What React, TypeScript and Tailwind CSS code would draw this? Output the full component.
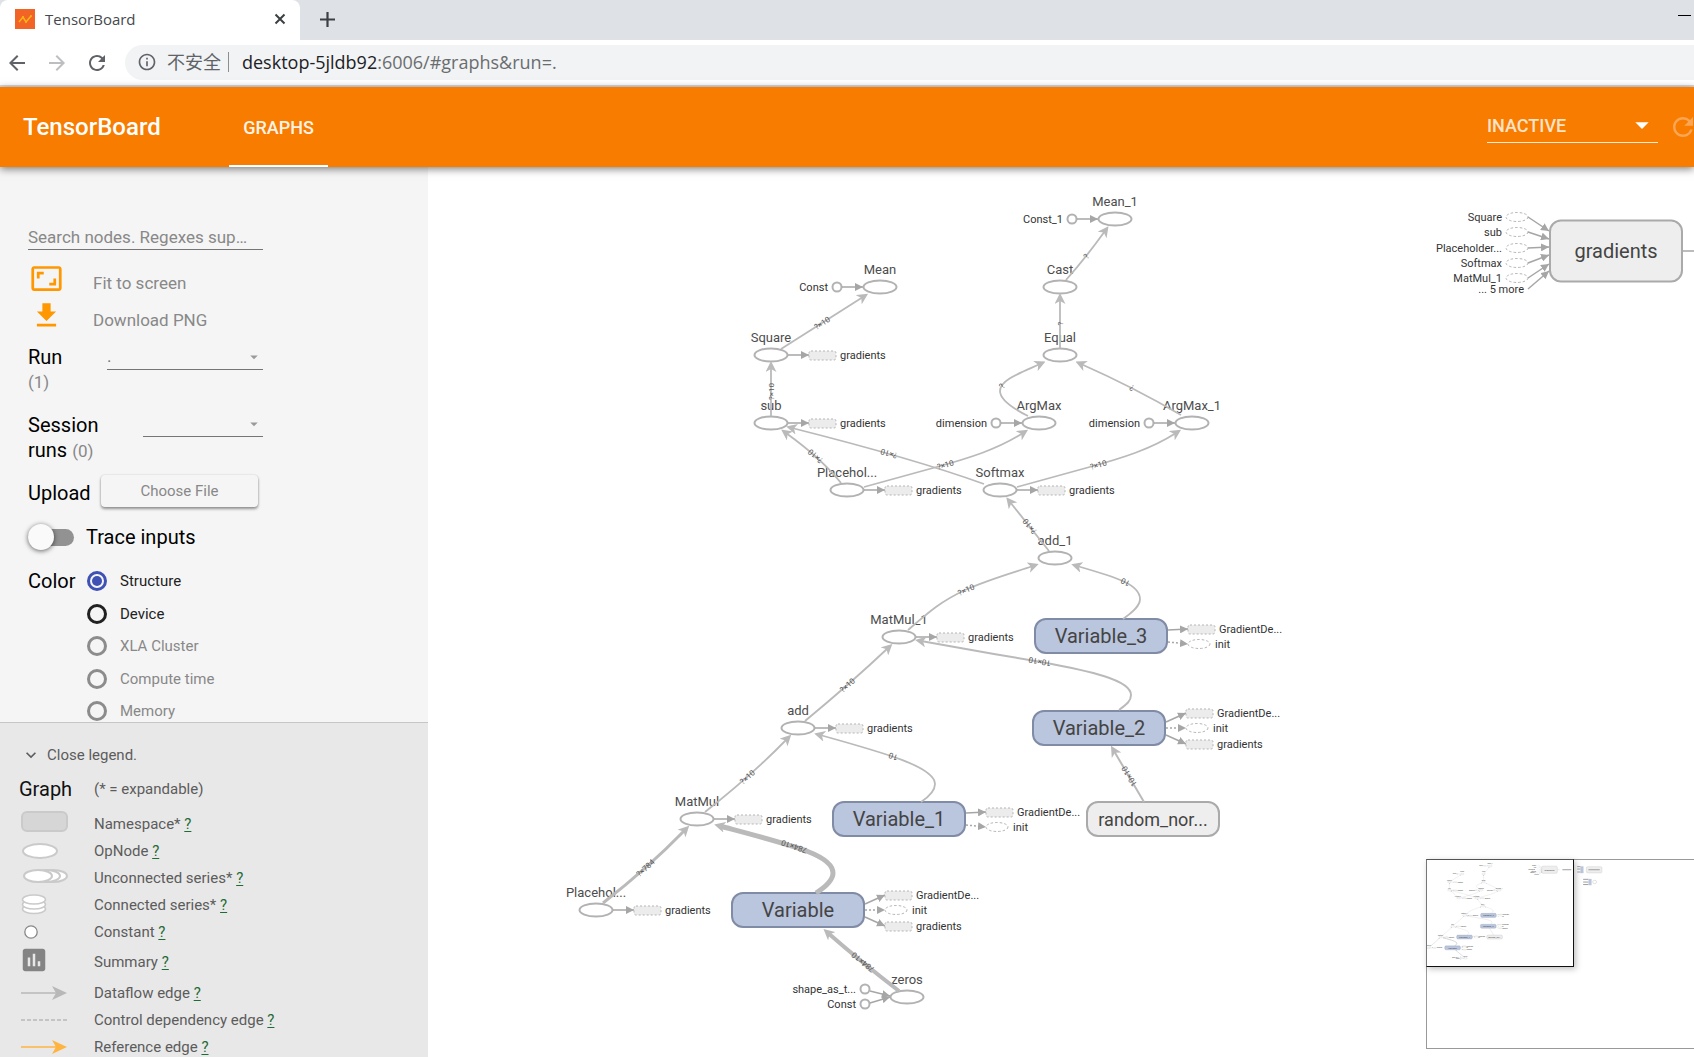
import type { ReactNode } from 'react';
import {
  MdArrowBack,
  MdArrowDropDown,
  MdArrowForward,
  MdAspectRatio,
  MdAssessment,
  MdFileDownload,
  MdInfoOutline,
  MdKeyboardArrowDown,
  MdRefresh,
} from 'react-icons/md';

type OpNode = {
  id: string;
  label: string;
  x: number;
  y: number;
  constant?: string;
  gradients?: boolean;
};

type GroupNode = {
  id: string;
  label: string;
  x: number;
  y: number;
  height: number;
  fontSize: number;
  plain?: boolean;
  outputs?: { label: string; dy: number; from: number; control?: boolean }[];
};

type Edge = {
  id: string;
  d: string;
  label: string;
  width?: number;
};

const OP_NODES: OpNode[] = [
  { id: 'mean1', label: 'Mean_1', x: 1115, y: 219, constant: 'Const_1' },
  { id: 'mean', label: 'Mean', x: 880, y: 287, constant: 'Const' },
  { id: 'cast', label: 'Cast', x: 1060, y: 287 },
  { id: 'square', label: 'Square', x: 771, y: 355, gradients: true },
  { id: 'equal', label: 'Equal', x: 1060, y: 355 },
  { id: 'sub', label: 'sub', x: 771, y: 423, gradients: true },
  { id: 'argmax', label: 'ArgMax', x: 1039, y: 423, constant: 'dimension' },
  { id: 'argmax1', label: 'ArgMax_1', x: 1192, y: 423, constant: 'dimension' },
  { id: 'placeholder1', label: 'Placehol...', x: 847, y: 490, gradients: true },
  { id: 'softmax', label: 'Softmax', x: 1000, y: 490, gradients: true },
  { id: 'add1', label: 'add_1', x: 1055, y: 558 },
  { id: 'matmul1', label: 'MatMul_1', x: 899, y: 637, gradients: true },
  { id: 'add', label: 'add', x: 798, y: 728, gradients: true },
  { id: 'matmul', label: 'MatMul', x: 697, y: 819, gradients: true },
  { id: 'placeholder', label: 'Placehol...', x: 596, y: 910, gradients: true },
  { id: 'zeros', label: 'zeros', x: 907, y: 997 },
];

const TWO_OUTPUTS = [
  { label: 'GradientDe...', dy: -7, from: -6 },
  { label: 'init', dy: 8, from: 6, control: true },
];

const THREE_OUTPUTS = [
  { label: 'GradientDe...', dy: -15, from: -6 },
  { label: 'init', dy: 0, from: 0, control: true },
  { label: 'gradients', dy: 16, from: 7 },
];

const GROUP_NODES: GroupNode[] = [
  { id: 'v3', label: 'Variable_3', x: 1101, y: 636, height: 34, fontSize: 20, outputs: TWO_OUTPUTS },
  { id: 'v2', label: 'Variable_2', x: 1099, y: 728, height: 34, fontSize: 20, outputs: THREE_OUTPUTS },
  { id: 'v1', label: 'Variable_1', x: 899, y: 819, height: 34, fontSize: 20, outputs: TWO_OUTPUTS },
  { id: 'v0', label: 'Variable', x: 798, y: 910, height: 34, fontSize: 20, outputs: THREE_OUTPUTS },
  { id: 'random', label: 'random_nor...', x: 1153, y: 819, height: 34, fontSize: 18, plain: true },
  { id: 'gradients', label: 'gradients', x: 1616, y: 251, height: 61, fontSize: 20, plain: true },
];

const EDGES: Edge[] = [
  { id: 'cast-mean1', d: 'M1066 280 Q1084 260 1105 231', label: '?' },
  { id: 'square-mean', d: 'M781 349 L863 297', label: '?×10' },
  { id: 'sub-square', d: 'M771 416 V367', label: '?×10' },
  { id: 'equal-cast', d: 'M1060 348 V299', label: '?' },
  { id: 'argmax-equal', d: 'M1028 416 C1012 408 1000 399 1000 391 C1000 380 1020 373 1040 364', label: '?' },
  { id: 'argmax1-equal', d: 'M1181 415 Q1133 387 1081 364', label: '?' },
  { id: 'placeholder-sub', d: 'M841 483 Q822 459 786 433', label: '?×10' },
  { id: 'softmax-sub', d: 'M984 484 Q915 459 792 428', label: '?×10' },
  { id: 'placeholder-argmax', d: 'M864 487 L933 468 C970 458 998 449 1023 433', label: '?×10' },
  { id: 'softmax-argmax1', d: 'M1017 487 L1086 468 C1123 458 1151 449 1176 433', label: '?×10' },
  { id: 'add1-softmax', d: 'M1049 551 L1010 502', label: '?×10' },
  { id: 'matmul1-add1', d: 'M908 630 C930 611 940 602 965 590 C990 579 1012 573 1033 566', label: '?×10' },
  { id: 'v3-add1', d: 'M1123 619 C1133 612 1140 606 1140 599 C1140 584 1115 577 1077 566', label: '10' },
  { id: 'v2-matmul1', d: 'M1119 710 C1127 704 1131 701 1131 695 C1131 680 1090 671 1041 662 C1000 655 965 649 921 641', label: '10×10', width: 2 },
  { id: 'add-matmul1', d: 'M805 721 Q851 683 888 648', label: '?×10' },
  { id: 'matmul-add', d: 'M705 812 Q751 776 787 739', label: '?×10' },
  { id: 'v1-add', d: 'M921 802 C930 796 935 790 935 784 C935 767 885 753 820 735', label: '10' },
  { id: 'placeholder-matmul', d: 'M603 903 Q648 868 685 830', label: '?×784', width: 3 },
  { id: 'v0-matmul', d: 'M816 893 C827 886 833 880 833 873 C833 855 795 846 720 826', label: '784×10', width: 5 },
  { id: 'zeros-v0', d: 'M899 991 Q860 961 828 933', label: '784×10', width: 4 },
  { id: 'random-v2', d: 'M1144 802 L1114 751', label: '10×10', width: 2 },
];

const GRADIENT_INPUTS = [
  { label: 'Square', y: 217, to: 231 },
  { label: 'sub', y: 232, to: 239 },
  { label: 'Placeholder...', y: 248, to: 247 },
  { label: 'Softmax', y: 263, to: 255 },
  { label: 'MatMul_1', y: 278, to: 264 },
];

function AnnotationBox({ x, y }: { x: number; y: number }) {
  return (
    <rect x={x} y={y - 4} width="27" height="9" rx="2" fill="#ececec" stroke="#b5b5b5" strokeDasharray="2 2" />
  );
}

function OpNodeShape({ node }: { node: OpNode }) {
  const { x, y } = node;
  return (
    <g>
      <ellipse cx={x} cy={y} rx="16.5" ry="6.5" fill="#fff" stroke="#b2b2b2" strokeWidth="2" />
      <text x={x} y={y - 13} textAnchor="middle" fontSize="13" fill="#4d4d4d">
        {node.label}
      </text>
      {node.constant && (
        <>
          <circle cx={x - 43} cy={y} r="4.5" fill="#fff" stroke="#b2b2b2" strokeWidth="2" />
          <path d={`M${x - 38} ${y} H${x - 17}`} stroke="#a6a6a6" strokeWidth="1.5" markerEnd="url(#small-arrow)" />
          <text x={x - 52} y={y + 4} textAnchor="end" fontSize="11" fill="#333">
            {node.constant}
          </text>
        </>
      )}
      {node.gradients && (
        <>
          <path d={`M${x + 17} ${y} H${x + 38}`} stroke="#a6a6a6" strokeWidth="1.5" markerEnd="url(#small-arrow)" />
          <AnnotationBox x={x + 38} y={y} />
          <text x={x + 69} y={y + 4} fontSize="11" fill="#333">
            gradients
          </text>
        </>
      )}
    </g>
  );
}

function GroupNodeShape({ node }: { node: GroupNode }) {
  const { x, y, height } = node;
  return (
    <g>
      <rect
        x={x - 66}
        y={y - height / 2}
        width="132"
        height={height}
        rx="11"
        fill={node.plain ? '#eee' : '#bac5de'}
        stroke={node.plain ? '#aaa' : '#808ba6'}
        strokeWidth="2"
      />
      <text x={x} y={y + 7} textAnchor="middle" fontSize={node.fontSize} fill="#444">
        {node.label}
      </text>
      {node.outputs?.map((out) => (
        <g key={out.label}>
          <path
            d={`M${x + 67} ${y + out.from} L${x + 87} ${y + out.dy}`}
            stroke="#a6a6a6"
            strokeWidth="1.5"
            strokeDasharray={out.control ? '2 2' : undefined}
            markerEnd="url(#small-arrow)"
          />
          {out.control ? (
            <ellipse cx={x + 98} cy={y + out.dy} rx="11" ry="4.5" fill="#fff" stroke="#b5b5b5" strokeDasharray="2.5 2" />
          ) : (
            <AnnotationBox x={x + 87} y={y + out.dy} />
          )}
          <text x={out.control ? x + 114 : x + 118} y={y + out.dy + 4} fontSize="11" fill="#333">
            {out.label}
          </text>
        </g>
      ))}
    </g>
  );
}

function GraphScene({ labels = true }: { labels?: boolean }) {
  return (
    <g fill="none">
      {OP_NODES.map((node) => (
        <OpNodeShape key={node.id} node={node} />
      ))}
      {GROUP_NODES.map((node) => (
        <GroupNodeShape key={node.id} node={node} />
      ))}

      {/* Constants feeding "zeros" */}
      <circle cx="865" cy="989" r="4.5" stroke="#b2b2b2" strokeWidth="2" />
      <circle cx="865" cy="1004" r="4.5" stroke="#b2b2b2" strokeWidth="2" />
      <path d="M870 991 L890 996" stroke="#a6a6a6" strokeWidth="1.5" markerEnd="url(#small-arrow)" />
      <path d="M870 1003 L890 997" stroke="#a6a6a6" strokeWidth="1.5" markerEnd="url(#small-arrow)" />
      <text x="856" y="993" textAnchor="end" fontSize="11" fill="#333">shape_as_t...</text>
      <text x="856" y="1008" textAnchor="end" fontSize="11" fill="#333">Const</text>

      {/* Inputs of the gradients namespace */}
      {GRADIENT_INPUTS.map((input) => (
        <g key={input.label}>
          <ellipse cx="1517" cy={input.y} rx="11" ry="4.5" stroke="#b5b5b5" strokeDasharray="2.5 2" />
          <path d={`M1528 ${input.y} L1549 ${input.to}`} stroke="#a6a6a6" strokeWidth="1.5" markerEnd="url(#small-arrow)" />
          <text x="1502" y={input.y + 4} textAnchor="end" fontSize="11" fill="#333">
            {input.label}
          </text>
        </g>
      ))}
      <path d="M1528 289 L1549 271" stroke="#a6a6a6" strokeWidth="1.5" markerEnd="url(#small-arrow)" />
      <text x="1524" y="293" textAnchor="end" fontSize="11" fill="#333">... 5 more</text>
      <path d="M1683 251 H1706" stroke="#a6a6a6" strokeWidth="1.5" />

      {EDGES.map((edge) => (
        <path
          key={edge.id}
          d={edge.d}
          stroke="#bababa"
          strokeWidth={edge.width ?? 1.8}
          markerEnd="url(#edge-arrow)"
        />
      ))}
      {labels &&
        EDGES.map((edge) => (
          <g key={edge.id}>
            <path id={edge.id} d={edge.d} />
            <text dy="3" fontSize="8" fill="#555" textAnchor="middle">
              <textPath href={`#${edge.id}`} startOffset="50%">
                {edge.label}
              </textPath>
            </text>
          </g>
        ))}
    </g>
  );
}

function Minimap() {
  return (
    <div className="absolute bottom-2 left-[998px] h-[190px] w-[300px] border border-[#999] bg-white">
      <svg className="h-full w-full" aria-hidden="true">
        <g transform="translate(-69 -20) scale(0.1185)">
          <GraphScene labels={false} />
          <rect x="1927" y="225" width="132" height="53" rx="12" fill="#eee" stroke="#aaa" strokeWidth="2" />
          <path d="M1945 251 H2040" stroke="#999" strokeWidth="8" />
          <path d="M1725 251 H1800 M1878 225 H1850 M1878 245 H1850 M1878 270 H1850" stroke="#999" strokeWidth="8" />
          <path d="M1890 222 V280" stroke="#bac5de" strokeWidth="26" />
          <path d="M1945 332 H1900 M1945 355 H1900 M1945 376 H1900" stroke="#999" strokeWidth="8" />
          <path d="M1958 328 V382" stroke="#bac5de" strokeWidth="26" />
          <ellipse cx="1997" cy="354" rx="17" ry="14" fill="none" stroke="#b2b2b2" strokeWidth="3" />
        </g>
      </svg>
      <div className="absolute -top-px -left-px h-[108px] w-[148px] border border-[#111] border-t-[#555] border-l-[#777] shadow-[2px_2px_6px_rgba(0,0,0,0.25)]" />
    </div>
  );
}

function GraphBoard() {
  return (
    <main className="relative min-w-0 flex-1 overflow-hidden bg-white">
      <svg className="block h-full w-full" role="img" aria-label="Main graph">
        <defs>
          <marker id="edge-arrow" markerUnits="userSpaceOnUse" markerWidth="11" markerHeight="11" refX="5" refY="5.5" orient="auto">
            <path d="M0 0 L11 5.5 L0 11 L3 5.5 Z" fill="#bababa" />
          </marker>
          <marker id="small-arrow" markerUnits="userSpaceOnUse" markerWidth="8" markerHeight="8" refX="8" refY="4" orient="auto">
            <path d="M0 0 L8 4 L0 8 Z" fill="#a6a6a6" />
          </marker>
        </defs>
        <g transform="translate(-428 -167)">
          <GraphScene />
        </g>
      </svg>
      <Minimap />
    </main>
  );
}

function BrowserChrome() {
  return (
    <div className="shrink-0 border-b-2 border-[#d6dae0] bg-white font-['Open_Sans','Noto_Sans_CJK_SC',sans-serif]">
      <div className="flex h-10 bg-[#dee1e6]">
        <div className="flex h-10 w-[300px] items-center rounded-t-lg bg-white pr-3 pb-0.5 pl-[15px]">
          <svg className="size-5" viewBox="0 0 20 20" aria-hidden="true">
            <rect width="20" height="20" fill="#f26425" />
            <path d="M4 13 L8 8 L11 13 L16 7" fill="none" stroke="#fdb515" strokeWidth="1.5" />
            <circle cx="8" cy="8" r="1" fill="#fdb515" />
            <circle cx="11" cy="13" r="1" fill="#fdb515" />
            <circle cx="16" cy="7" r="1" fill="#fdb515" />
          </svg>
          <span className="ml-2.5 flex-1 text-[15px] leading-5 text-[#45494d]">TensorBoard</span>
          <button type="button" aria-label="Close tab" className="flex size-4 items-center justify-center">
            <svg className="size-3" viewBox="0 0 12 12" aria-hidden="true">
              <path d="M1.5 1.5 L10.5 10.5 M10.5 1.5 L1.5 10.5" stroke="#3c4043" strokeWidth="2" />
            </svg>
          </button>
        </div>
        <button type="button" aria-label="New tab" className="ml-5 self-center pb-0.5">
          <svg className="size-[15px]" viewBox="0 0 15 15" aria-hidden="true">
            <path d="M7.5 0 V15 M0 7.5 H15" stroke="#3c4043" strokeWidth="2.2" />
          </svg>
        </button>
        <button type="button" aria-label="Minimize" className="mt-[15px] mr-[3px] ml-auto h-px w-[13px] bg-black" />
      </div>
      <div className="flex h-[45px] items-center pl-[5px] text-[#5f6368]">
        <button type="button" aria-label="Back">
          <MdArrowBack className="size-6" />
        </button>
        <button type="button" aria-label="Forward" className="ml-4 text-[#bcbebf]">
          <MdArrowForward className="size-6" />
        </button>
        <button type="button" aria-label="Reload" className="ml-4">
          <MdRefresh className="size-6" />
        </button>
        <div className="ml-4 flex h-[35px] flex-1 items-center rounded-l-full bg-[#f1f3f4] pb-0.5 pl-3">
          <MdInfoOutline className="size-5" />
          <span className="ml-2.5 text-[18px] leading-6">不安全</span>
          <span className="mx-[7px] h-5 w-px bg-[#8c8f92]" />
          <span className="ml-1.5 text-[18px] leading-6 text-[#6a6d70]">
            <span className="text-[#202124]">desktop-5jldb92</span>:6006/#graphs&run=.
          </span>
        </div>
      </div>
    </div>
  );
}

function Header() {
  return (
    <header className="relative z-10 flex h-20 shrink-0 items-stretch bg-[#f77c00] text-white shadow-[0_2px_8px_rgba(0,0,0,0.5)]">
      <h1 className="flex w-[229px] items-center pl-[23px] text-[24px] font-medium">TensorBoard</h1>
      <nav className="flex">
        <button type="button" className="w-[99px] border-b-2 border-white pt-0.5 text-[18px] font-medium text-[#fff3e6]">
          GRAPHS
        </button>
      </nav>
      <div className="ml-auto flex items-center">
        <div className="relative mb-1 flex items-center">
          <select
            aria-label="Dashboard"
            className="h-9 w-[171px] appearance-none border-b border-[#fdebd8] bg-transparent pt-0.5 text-[18px] font-medium text-[#fee3c8] outline-none"
          >
            <option>INACTIVE</option>
          </select>
          <MdArrowDropDown className="pointer-events-none absolute right-0 size-8" />
        </div>
        <button type="button" aria-label="Reload data" className="ml-2.5 -mr-1 text-[#fba654]">
          <MdRefresh className="size-[30px]" />
        </button>
      </div>
    </header>
  );
}

const COLOR_MODES = [
  { label: 'Structure', disabled: false },
  { label: 'Device', disabled: false },
  { label: 'XLA Cluster', disabled: true },
  { label: 'Compute time', disabled: true },
  { label: 'Memory', disabled: true },
];

function Dropdown({ id, value }: { id: string; value: string }) {
  return (
    <div className="relative flex flex-1 items-start">
      <select
        id={id}
        className="h-7 w-full appearance-none border-b border-[#757575] bg-transparent text-[17px] text-[#757575] outline-none"
      >
        <option>{value}</option>
      </select>
      <MdArrowDropDown className="pointer-events-none absolute top-1.5 right-0 size-[18px] text-[#9a9a9a]" />
    </div>
  );
}

function Controls() {
  return (
    <section className="min-h-0 flex-1 overflow-hidden text-[20px] leading-6 text-black">
      <div className="w-[263px] pt-[55px] pl-7">
        <input
          type="text"
          aria-label="Search nodes"
          placeholder="Search nodes. Regexes supported."
          className="block h-7 w-full border-b border-[#757575] bg-transparent pt-0.5 pr-3 text-[17px] text-ellipsis outline-none placeholder:text-[#888]"
        />
        <button type="button" className="mt-3 flex h-[37px] items-center gap-[30px] pl-0.5 text-[17px] text-[#888]">
          <MdAspectRatio className="mb-1 size-[33px] text-[#ff9800]" />
          <span className="pt-1">Fit to screen</span>
        </button>
        <button type="button" className="flex h-[37px] items-center gap-[30px] pl-0.5 text-[17px] text-[#888]">
          <MdFileDownload className="mb-1 size-[33px] text-[#ff9800]" />
          <span className="pt-1">Download PNG</span>
        </button>

        <div className="mt-1.5 flex">
          <label htmlFor="run" className="w-[79px] pt-[3px] leading-[25px]">
            Run
            <span className="block text-[17px] text-[#888]">(1)</span>
          </label>
          <Dropdown id="run" value="." />
        </div>
        <div className="mt-3.5 flex">
          <label htmlFor="session" className="w-[115px] pt-1 leading-[25px]">
            Session
            <br />
            runs <span className="text-[17px] text-[#888]">(0)</span>
          </label>
          <Dropdown id="session" value="" />
        </div>

        <div className="mt-[11px] flex items-center">
          <span className="w-[73px] pt-1">Upload</span>
          <button
            type="button"
            className="h-8 w-[157px] rounded-sm text-[15px] text-[#888] shadow-[0_2px_3px_rgba(0,0,0,0.4),0_0_2px_rgba(0,0,0,0.15)]"
          >
            Choose File
          </button>
        </div>

        <label className="mt-[18px] flex items-center">
          <input type="checkbox" className="peer sr-only" />
          <span className="flex h-[17px] w-[46px] items-center rounded-full bg-[#929292]">
            <span className="size-[26px] shrink-0 rounded-full bg-[#fafafa] shadow-[0_1px_5px_rgba(0,0,0,0.6)]" />
          </span>
          <span className="ml-3">Trace inputs</span>
        </label>

        <fieldset className="mt-4 flex">
          <legend className="float-left w-[59px] pt-1">Color</legend>
          <div className="flex-1">
            {COLOR_MODES.map((mode, i) => (
              <label
                key={mode.label}
                className={`flex items-center gap-[13px] text-[15px] ${i % 2 === 0 ? 'h-8' : 'h-[33px]'} ${mode.disabled ? 'text-[#888]' : 'text-[#222]'}`}
              >
                <input
                  type="radio"
                  name="color"
                  defaultChecked={i === 0}
                  disabled={mode.disabled}
                  className="size-5 appearance-none rounded-full border-3 border-[#212121] p-0.5 checked:border-[#3f51b5] checked:bg-[#3f51b5] checked:bg-clip-content disabled:border-[#8c8c8c]"
                />
                {mode.label}
              </label>
            ))}
          </div>
        </fieldset>
      </div>
    </section>
  );
}

function LegendRow({ icon, label, className = 'h-[27px]' }: { icon: ReactNode; label: string; className?: string }) {
  return (
    <li className={`flex items-center ${className}`}>
      <span className="w-[73px]">{icon}</span>
      <span>
        {label}{' '}
        <a href="#help" className="text-[#1f6b35] underline underline-offset-2">
          ?
        </a>
      </span>
    </li>
  );
}

function ArrowIcon({ color }: { color: string }) {
  return (
    <svg width="48" height="16" aria-hidden="true">
      <path d="M0 8 H38" stroke={color} strokeWidth="1.5" />
      <path d="M31 1 L46 8 L31 15 L35 8 Z" fill={color} />
    </svg>
  );
}

function Legend() {
  return (
    <section className="h-[335px] shrink-0 overflow-hidden border-t border-[#c6c6c6] bg-[#e8e8e8] pt-5 text-[15px] leading-5 text-[#5c5c5c]">
      <button type="button" className="flex h-6 items-center pl-[21px]">
        <MdKeyboardArrowDown className="size-5" />
        <span className="ml-1.5">Close legend.</span>
      </button>
      <div className="mt-2.5 flex h-6 items-center pl-[19px]">
        <h2 className="w-[75px] text-[20px] text-[#111]">Graph</h2>
        <span>(* = expandable)</span>
      </div>
      <ul className="mt-[9px] pl-[21px]">
        <LegendRow
          label="Namespace*"
          icon={
            <svg className="mb-1" width="48" height="22" aria-hidden="true">
              <rect x="1" y="1" width="45" height="19" rx="5" fill="#d6d6d6" stroke="#cacaca" strokeWidth="2" />
            </svg>
          }
        />
        <LegendRow
          label="OpNode"
          icon={
            <svg width="48" height="18" aria-hidden="true">
              <ellipse cx="19" cy="9" rx="17" ry="7" fill="#fff" stroke="#cacaca" strokeWidth="2" />
            </svg>
          }
        />
        <LegendRow
          label="Unconnected series*"
          icon={
            <svg className="mb-1" width="48" height="16" aria-hidden="true">
              <g fill="#fff" stroke="#cacaca" strokeWidth="2">
                <ellipse cx="32" cy="8" rx="14" ry="6" />
                <ellipse cx="25" cy="8" rx="14" ry="6" />
                <ellipse cx="17" cy="8" rx="14" ry="6" />
              </g>
            </svg>
          }
        />
        <LegendRow
          label="Connected series*"
          icon={
            <svg width="48" height="22" aria-hidden="true">
              <g fill="#fff" stroke="#cacaca" strokeWidth="1.5">
                <ellipse cx="13" cy="15" rx="11.5" ry="4.5" />
                <ellipse cx="13" cy="10.5" rx="11.5" ry="4.5" />
                <ellipse cx="13" cy="5.5" rx="11.5" ry="4.5" />
              </g>
            </svg>
          }
        />
        <LegendRow
          label="Constant"
          icon={
            <svg width="48" height="16" aria-hidden="true">
              <circle cx="10" cy="8" r="6.2" fill="#fff" stroke="#888" strokeWidth="1.3" />
            </svg>
          }
        />
        <LegendRow
          className="h-[34px]"
          label="Summary"
          icon={<MdAssessment className="mb-1 -ml-0.5 size-[30px] text-[#848484]" />}
        />
        <LegendRow label="Dataflow edge" icon={<ArrowIcon color="#b8b8b8" />} />
        <LegendRow
          label="Control dependency edge"
          icon={
            <svg width="48" height="8" aria-hidden="true">
              <path d="M0 4 H46" stroke="#b8b8b8" strokeWidth="1.3" strokeDasharray="4 2" />
            </svg>
          }
        />
        <LegendRow label="Reference edge" icon={<ArrowIcon color="#ffb43f" />} />
      </ul>
    </section>
  );
}

export default function App() {
  return (
    <div className="flex h-screen flex-col overflow-hidden bg-white font-['Roboto','Liberation_Sans',sans-serif]">
      <BrowserChrome />
      <Header />
      <div className="flex min-h-0 flex-1">
        <aside className="flex w-[428px] shrink-0 flex-col bg-[#f5f5f5]">
          <Controls />
          <Legend />
        </aside>
        <GraphBoard />
      </div>
    </div>
  );
}
